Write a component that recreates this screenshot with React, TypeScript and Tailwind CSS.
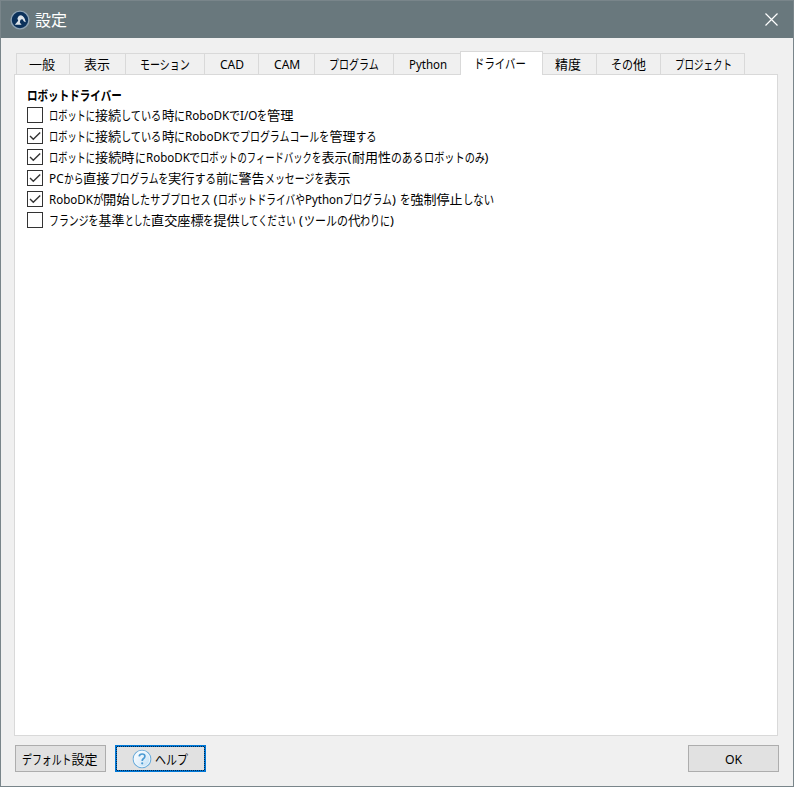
import { useLayoutEffect, useRef, useState } from 'react'
import { clsx } from 'clsx'

// [texto, largura em px]
type Run = [string, number]

interface TabItem {
  runs: Run[]
  className: string
  active?: boolean
}

interface Option {
  runs: Run[]
  checked: boolean
}

const TABS: TabItem[] = [
  { runs: [['一般', 26]], className: 'w-[54px] pl-[12px] border-l' },
  { runs: [['表示', 26]], className: 'w-[56px] pl-[14px]' },
  { runs: [['モーション', 50]], className: 'w-[79px] pl-[14px]' },
  { runs: [['CAD', 24]], className: 'w-[54px] pl-[15px]' },
  { runs: [['CAM', 26]], className: 'w-[56px] pl-[15px]' },
  { runs: [['プログラム', 50]], className: 'w-[79px] pl-[14px]' },
  { runs: [['Python', 38]], className: 'w-[67px] pl-[15px]' },
  { runs: [['ドライバー', 52]], className: 'w-[83px] pl-[13px]', active: true },
  { runs: [['精度', 26]], className: 'w-[54px] pl-[12px]' },
  { runs: [['その', 22], ['他', 13]], className: 'w-[64px] pl-[14px]' },
  { runs: [['プロジェクト', 57]], className: 'w-[84px] pl-[14px]' },
]

const OPTIONS: Option[] = [
  {
    checked: false,
    runs: [['ロボットに', 46], ['接続', 26], ['している', 40.5], ['時', 12.5], ['に', 11], ['RoboDK', 44], ['で', 11], ['I/O', 17], ['を', 10], ['管理', 26.5]],
  },
  {
    checked: true,
    runs: [['ロボットに', 46], ['接続', 26], ['している', 40.5], ['時', 12.5], ['に', 11], ['RoboDK', 44], ['で', 11], ['プログラムコールを', 89.5], ['管理', 26], ['する', 20.5]],
  },
  {
    checked: true,
    runs: [['ロボットに', 46], ['接続時', 39.5], ['に', 11], ['RoboDK', 43.5], ['で', 11], ['ロボットのフィードバックを', 121.5], ['表示', 26], ['(', 4.5], ['耐用性', 39], ['のある', 32.5], ['ロボットのみ', 61], [')', 5]],
  },
  {
    checked: true,
    runs: [['PC', 14.5], ['から', 19.5], ['直接', 26.5], ['プログラムを', 58.5], ['実行', 26.5], ['する', 21], ['前', 12.5], ['に', 10.5], ['警告', 26], ['メッセージを', 59.5], ['表示', 26.5]],
  },
  {
    checked: true,
    runs: [['RoboDK', 43.5], ['が', 10.5], ['開始', 26.5], ['したサブプロセス', 80.5], ['', 3.5], ['(', 4.5], ['ロボットドライバや', 87], ['Python', 38], ['プログラム', 49], [')', 5], ['', 3], ['を', 10.5], ['強制停止', 52], ['しない', 31]],
  },
  {
    checked: false,
    runs: [['フランジを', 49.5], ['基準', 26], ['とした', 26], ['直交座標', 52.5], ['を', 10.5], ['提供', 26], ['してください', 55.5], ['', 4], ['(', 4.5], ['ツールの', 44], ['代', 12.5], ['わりに', 30], [')', 5]],
  },
]

// Ajusta o texto na largura fixa, como a fonte proporcional do Windows
function FitRun({ text, width }: { text: string; width: number }) {
  const ref = useRef<HTMLSpanElement>(null)
  const [scale, setScale] = useState(1)

  useLayoutEffect(() => {
    const natural = ref.current?.offsetWidth ?? 0
    // parenteses ficam sem escala
    if (natural > 0 && !/^[()]$/.test(text)) setScale(width / natural)
  }, [text, width])

  return (
    <span className="inline-block" style={{ width }}>
      <span
        ref={ref}
        className="inline-block origin-left"
        style={{ transform: scale === 1 ? undefined : `scaleX(${scale})` }}
      >
        {text}
      </span>
    </span>
  )
}

function Label({ runs, className }: { runs: Run[]; className?: string }) {
  return (
    <span className={clsx('flex whitespace-nowrap leading-4', className)}>
      {runs.map(([text, width], i) => (
        <FitRun key={i} text={text} width={width} />
      ))}
    </span>
  )
}

function AppLogo() {
  return (
    <svg width="20" height="20" viewBox="0 0 20 20">
      <circle cx="10" cy="10" r="8.9" fill="#0b315b" stroke="#8fa3b3" strokeWidth="1.4" />
      <path d="M4.8 14.8 L8.2 10.8 L7.4 8.6 Q8.4 5.2 11 5.2 Q14.6 6 15.8 12.2 L14 11.6 L12.2 9 L10.4 10 L9.8 12.6 L11.6 14.8 Z" fill="#dce3e9" />
    </svg>
  )
}

function HelpIcon() {
  return (
    <svg width="20" height="20" viewBox="0 0 20 20">
      <defs>
        <linearGradient id="helpFill" x1="0" y1="0" x2="1" y2="1">
          <stop offset="0" stopColor="#ffffff" />
          <stop offset="0.5" stopColor="#e4f1fb" />
          <stop offset="1" stopColor="#b5daf4" />
        </linearGradient>
      </defs>
      <circle cx="10" cy="10" r="8.8" fill="url(#helpFill)" stroke="#6faedb" strokeWidth="1.1" />
      <circle cx="10" cy="10" r="7.8" fill="none" stroke="#f3faff" strokeWidth="0.8" />
      <path d="M7.2 7.4 Q7.5 5 10.1 5 Q12.9 5 12.9 7.3 Q12.9 8.7 11.3 9.8 Q10.2 10.6 10.2 12" fill="none" stroke="#4b9bd3" strokeWidth="1.7" />
      <circle cx="10.2" cy="14.3" r="1.1" fill="#4b9bd3" />
    </svg>
  )
}

// Linha pontilhada do botao com foco
function FocusDots() {
  return (
    <svg className="pointer-events-none absolute -top-px -left-px" width="89" height="25" viewBox="0 0 89 25">
      <path d="M1 0.5 H88 M1 24.5 H88 M0.5 1 V24 M88.5 1 V24" fill="none" stroke="#06294a" strokeWidth="1" strokeDasharray="1 1" shapeRendering="crispEdges" />
    </svg>
  )
}

function CheckBox({ checked }: { checked: boolean }) {
  return (
    <span className="flex h-4 w-4 shrink-0 items-center justify-center border border-[#333] bg-white">
      {checked && (
        <svg width="14" height="14" viewBox="0 0 14 14">
          <path d="M2 7 L5.3 10.3 L12.2 3.4" fill="none" stroke="#333" strokeWidth="1.4" />
        </svg>
      )}
    </span>
  )
}

export default function App() {
  return (
    <div className="flex h-[787px] w-[794px] flex-col border border-[#79858a] bg-[#f0f0f0] font-['Noto_Sans','Noto_Sans_CJK_JP',sans-serif] text-[13px] text-black">
      {/* Barra de titulo */}
      <header className="flex h-[37px] shrink-0 items-center justify-between bg-[#69787d] pl-[9px] pr-[15px]">
        <div className="flex items-center gap-[5px] text-base leading-none text-white">
          <AppLogo />
          <Label runs={[['設定', 32]]} />
        </div>
        <svg width="13" height="13" viewBox="0 0 13 13">
          <path d="M0.5 0.5 L12.5 12.5 M12.5 0.5 L0.5 12.5" stroke="#fff" strokeWidth="1.2" />
        </svg>
      </header>

      <main className="flex flex-1 flex-col px-[13px] pt-[13px]">
        {/* Abas */}
        <nav className="z-10 -mb-px flex h-6 shrink-0 items-end pl-[2px]">
          {TABS.map((tab, i) => (
            <div
              key={i}
              className={clsx(
                'flex shrink-0 items-center border-t border-r border-[#d9d9d9]',
                tab.className,
                tab.active ? '-ml-px h-6 border-l bg-white pb-[2px]' : 'h-[22px] border-b',
              )}
            >
              <Label runs={tab.runs} />
            </div>
          ))}
        </nav>

        <section className="h-[662px] w-[764px] shrink-0 border border-[#d9d9d9] bg-white pl-3 pt-3">
          <h2 className="font-bold">
            <Label runs={[['ロボットドライバー', 95]]} />
          </h2>
          <div className="mt-1 flex flex-col gap-[5px]">
            {OPTIONS.map((option, i) => (
              <div key={i} className="flex h-4 items-center gap-[6px]">
                <CheckBox checked={option.checked} />
                <Label runs={option.runs} />
              </div>
            ))}
          </div>
        </section>

        {/* Botoes */}
        <footer className="ml-px mt-[9px] flex h-[27px] w-[764px] gap-[9px]">
          <button className="flex w-[91px] items-center border border-[#adadad] bg-[#e1e1e1] pl-[6px]">
            <Label runs={[['デフォルト', 49.5], ['設定', 26]]} />
          </button>
          <button className="relative flex w-[91px] items-center gap-[3px] border-2 border-[#0078d7] bg-[#e1e1e1] pl-[15px]">
            <HelpIcon />
            <Label runs={[['ヘルプ', 33]]} />
            <FocusDots />
          </button>
          <button className="ml-auto flex w-[91px] items-center justify-center border border-[#adadad] bg-[#e1e1e1]">
            <Label runs={[['OK', 17]]} />
          </button>
        </footer>
      </main>
    </div>
  )
}
